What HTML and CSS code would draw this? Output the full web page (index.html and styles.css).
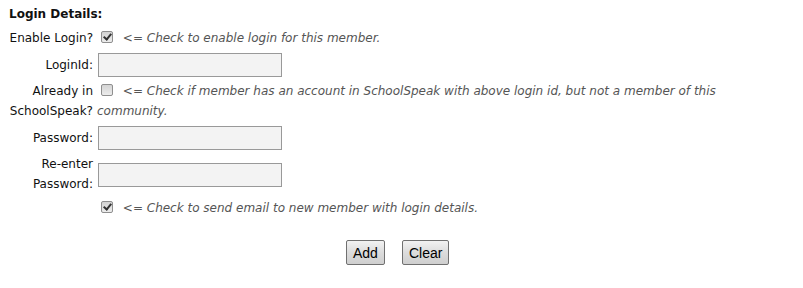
FILE: index.html
```html
<!DOCTYPE html>
<html lang="en">
<head>
  <meta charset="UTF-8" />
  <title>Login Details</title>
  <link rel="stylesheet" href="styles.css">
</head>
<body>
  <div class="section-title">Login Details:</div>

  <table class="login-form">
    <tr>
      <td class="label">Enable Login?</td>
      <td class="field">
        <input type="checkbox" class="check" checked>
        <span class="hint">&lt;= Check to enable login for this member.</span>
      </td>
    </tr>
    <tr>
      <td class="label">LoginId:</td>
      <td class="field"><input type="text" class="text-input"></td>
    </tr>
    <tr>
      <td class="label">Already in SchoolSpeak?</td>
      <td class="field">
        <input type="checkbox" class="check">
        <span class="hint">&lt;= Check if member has an account in SchoolSpeak with above login id, but not a member of this community.</span>
      </td>
    </tr>
    <tr>
      <td class="label">Password:</td>
      <td class="field"><input type="password" class="text-input"></td>
    </tr>
    <tr>
      <td class="label">Re-enter Password:</td>
      <td class="field"><input type="password" class="text-input"></td>
    </tr>
    <tr>
      <td class="label"></td>
      <td class="field">
        <input type="checkbox" class="check" checked>
        <span class="hint">&lt;= Check to send email to new member with login details.</span>
      </td>
    </tr>
  </table>

  <div class="actions">
    <button class="btn">Add</button>
    <button class="btn">Clear</button>
  </div>
</body>
</html>
```

FILE: styles.css
```css
* {
  box-sizing: border-box;
}

body {
  margin: 0;
  padding: 4px 0 0 9px;
  font-family: "DejaVu Sans", Verdana, sans-serif;
  font-size: 12px;
  color: #111;
  background: #fff;
}

.section-title {
  font-weight: bold;
  line-height: 20px;
}

.login-form {
  border-collapse: collapse;
  margin-top: 2px;
  width: 720px;
}

.login-form td {
  padding: 2px 0;
  line-height: 20px;
}

.label {
  width: 88px;
  padding-right: 4px !important;
  text-align: right;
  vertical-align: middle;
}

.field {
  vertical-align: middle;
}

.hint {
  font-style: italic;
  color: #555;
  margin-left: 4px;
}

/* old-style grey checkbox */
.check {
  -webkit-appearance: none;
  appearance: none;
  width: 12px;
  height: 12px;
  margin: 0 2px 0 4px;
  vertical-align: -1px;
  border: 1px solid #8f8f8f;
  border-radius: 2px;
  background: linear-gradient(#d4d4d4, #ececec);
  position: relative;
}

.check:checked::after {
  content: "";
  position: absolute;
  left: 3px;
  top: 0px;
  width: 3px;
  height: 6px;
  border: solid #333;
  border-width: 0 2px 2px 0;
  transform: rotate(40deg);
}

.text-input {
  width: 184px;
  height: 24px;
  margin: 1px 0 0 1px;
  border: 1px solid #999;
  background: #f3f3f3;
  vertical-align: middle;
}

.actions {
  display: flex;
  gap: 17px;
  margin: 20px 0 0 337px;
}

.btn {
  font-family: "Liberation Sans", Arial, sans-serif;
  font-size: 14px;
  color: #000;
  height: 25px;
  padding: 0 6px;
  border: 1px solid #707070;
  border-radius: 2px;
  background: linear-gradient(#f2f2f2, #dcdcdc 50%, #cfcfcf);
  cursor: pointer;
}
```
